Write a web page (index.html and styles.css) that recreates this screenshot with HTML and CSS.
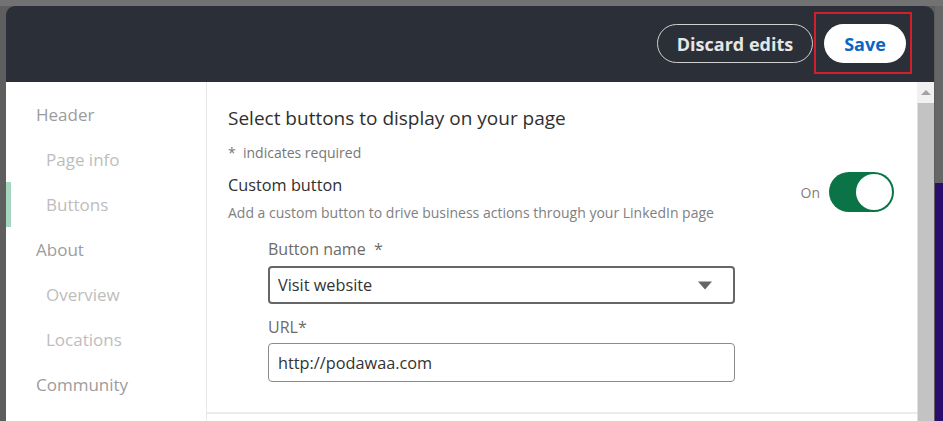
FILE: index.html
```html
<!DOCTYPE html>
<html lang="en">
<head>
  <meta charset="UTF-8" />
  <title>Edit page - Buttons</title>
  <link rel="stylesheet" href="styles.css">
</head>
<body>
  <div class="page">
    <div class="modal">
      <div class="modal-header">
        <button class="btn btn-ghost">Discard edits</button>
        <div class="highlight">
          <button class="btn btn-save">Save</button>
        </div>
      </div>
      <div class="modal-body">
        <nav class="sidebar">
          <div class="nav-item">Header</div>
          <div class="nav-item sub">Page info</div>
          <div class="nav-item sub active">Buttons</div>
          <div class="nav-item">About</div>
          <div class="nav-item sub">Overview</div>
          <div class="nav-item sub">Locations</div>
          <div class="nav-item">Community</div>
        </nav>
        <main class="content">
          <h2 class="title">Select buttons to display on your page</h2>
          <p class="required-note">*&nbsp; indicates required</p>
          <div class="option-row">
            <div class="option-text">
              <div class="option-name">Custom button</div>
              <div class="option-desc">Add a custom button to drive business actions through your LinkedIn page</div>
            </div>
            <div class="toggle-wrap">
              <span class="toggle-label">On</span>
              <span class="toggle"><span class="knob"></span></span>
            </div>
          </div>
          <div class="fields">
            <label class="field-label">Button name&nbsp;&nbsp;*</label>
            <div class="select">
              <span>Visit website</span>
              <svg class="caret" width="16" height="9" viewBox="0 0 16 9"><path d="M1 0.5h14L8 8.5z" fill="#666"/></svg>
            </div>
            <label class="field-label url">URL*</label>
            <div class="input">http://podawaa.com</div>
          </div>
          <div class="divider"></div>
        </main>
        <div class="scrollbar">
          <div class="scroll-up"></div>
          <div class="scroll-thumb"></div>
        </div>
      </div>
    </div>
    <div class="backdrop-edge">
      <div class="edge-top"></div>
      <div class="edge-bottom"></div>
    </div>
  </div>
</body>
</html>
```

FILE: styles.css
```css
* { margin: 0; padding: 0; box-sizing: border-box; }
body {
  background: #5e5e5e;
  font-family: "Open Sans", "Noto Sans", sans-serif;
  overflow: hidden;
}
.page {
  display: flex;
  height: 421px;
  padding-top: 6px;
  background: linear-gradient(#727272 0 6px, #5e5e5e 6px);
}
/* Modal */
.modal {
  margin-left: 6px;
  width: 928px;
  display: flex;
  flex-direction: column;
}
.modal-header {
  height: 76px;
  background: #2b3038;
  border-radius: 9px 9px 0 0;
  display: flex;
  justify-content: flex-end;
  align-items: flex-start;
  padding: 6px 22px 0 0;
}
.btn {
  font-family: inherit;
  font-weight: 700;
  font-size: 18px;
  border-radius: 20px;
  height: 39px;
  cursor: pointer;
}
.btn-ghost {
  margin-top: 12px;
  width: 156px;
  background: transparent;
  color: #e6e6e6;
  border: 1px solid #d0d0d0;
}
.highlight {
  margin-left: 1px;
  border: 2px solid #d11f2f;
  padding: 10px 4px 9px 8px;
}
.btn-save {
  width: 82px;
  background: #fff;
  color: #0a66c2;
  border: none;
}
.modal-body {
  flex: 1;
  display: flex;
  background: #fff;
}
/* Sidebar */
.sidebar {
  width: 201px;
  border-right: 1px solid #e8e8e8;
  padding-top: 10px;
}
.nav-item {
  height: 45px;
  line-height: 45px;
  padding-left: 30px;
  font-size: 17px;
  color: #9c9c9c;
}
.nav-item.sub {
  padding-left: 40px;
  color: #bdbdbd;
}
.nav-item.active {
  box-shadow: inset 5px 0 0 #a6d5c0;
}
/* Content */
.content {
  flex: 1;
  padding: 24px 23px 0 21px;
}
.title {
  font-size: 19px;
  font-weight: 400;
  line-height: 24px;
  color: #2f2f2f;
}
.required-note {
  margin-top: 14px;
  font-size: 14px;
  line-height: 18px;
  color: #777;
}
.option-row {
  display: flex;
  justify-content: space-between;
  align-items: flex-start;
  margin-top: 12px;
}
.option-name {
  font-size: 16.3px;
  line-height: 22px;
  color: #2f2f2f;
}
.option-desc {
  margin-top: 8px;
  font-size: 14px;
  line-height: 18px;
  color: #808080;
}
.toggle-wrap {
  display: flex;
  align-items: center;
  margin-top: -2px;
}
.toggle-label {
  font-size: 14px;
  color: #808080;
  margin-right: 9px;
}
.toggle {
  display: flex;
  justify-content: flex-end;
  align-items: center;
  width: 65px;
  height: 40px;
  border-radius: 20px;
  background: #0a7446;
  padding: 2px;
}
.knob {
  width: 36px;
  height: 36px;
  border-radius: 50%;
  background: #fff;
}
.fields {
  margin-left: 40px;
  width: 467px;
}
.field-label {
  display: block;
  margin-top: 17px;
  font-size: 16px;
  line-height: 20px;
  color: #6b6b6b;
}
.field-label.url { margin-top: 13px; }
.select {
  margin-top: 7px;
  height: 38px;
  border: 2px solid #666;
  border-radius: 4px;
  display: flex;
  align-items: center;
  justify-content: space-between;
  padding: 0 20px 0 8px;
  font-size: 16.3px;
  color: #333;
}
.input {
  margin-top: 6px;
  height: 39px;
  border: 1px solid #8c8c8c;
  border-radius: 4px;
  display: flex;
  align-items: center;
  padding: 0 9px;
  font-size: 16.3px;
  color: #333;
}
.divider {
  margin: 30px -23px 0 -21px;
  border-top: 2px solid #ececec;
}
/* Scrollbar */
.scrollbar {
  width: 17px;
  background: #f1f1f1;
  display: flex;
  flex-direction: column;
}
.scroll-up {
  height: 21px;
  display: flex;
  justify-content: center;
  padding-top: 8px;
}
.scroll-up::before {
  content: "";
  border-left: 5px solid transparent;
  border-right: 5px solid transparent;
  border-bottom: 5px solid #a3a3a3;
  height: 0;
}
.scroll-thumb {
  flex: 1;
  background: #c3c3c3;
  border-left: 1px solid #e0e0e0;
}
/* Background page peeking through on the right */
.backdrop-edge {
  flex: 1;
  display: flex;
  flex-direction: column;
  margin-left: 1px;
}
.edge-top { height: 177px; background: #666; }
.edge-bottom { flex: 1; background: #2a0d6c; }
```
